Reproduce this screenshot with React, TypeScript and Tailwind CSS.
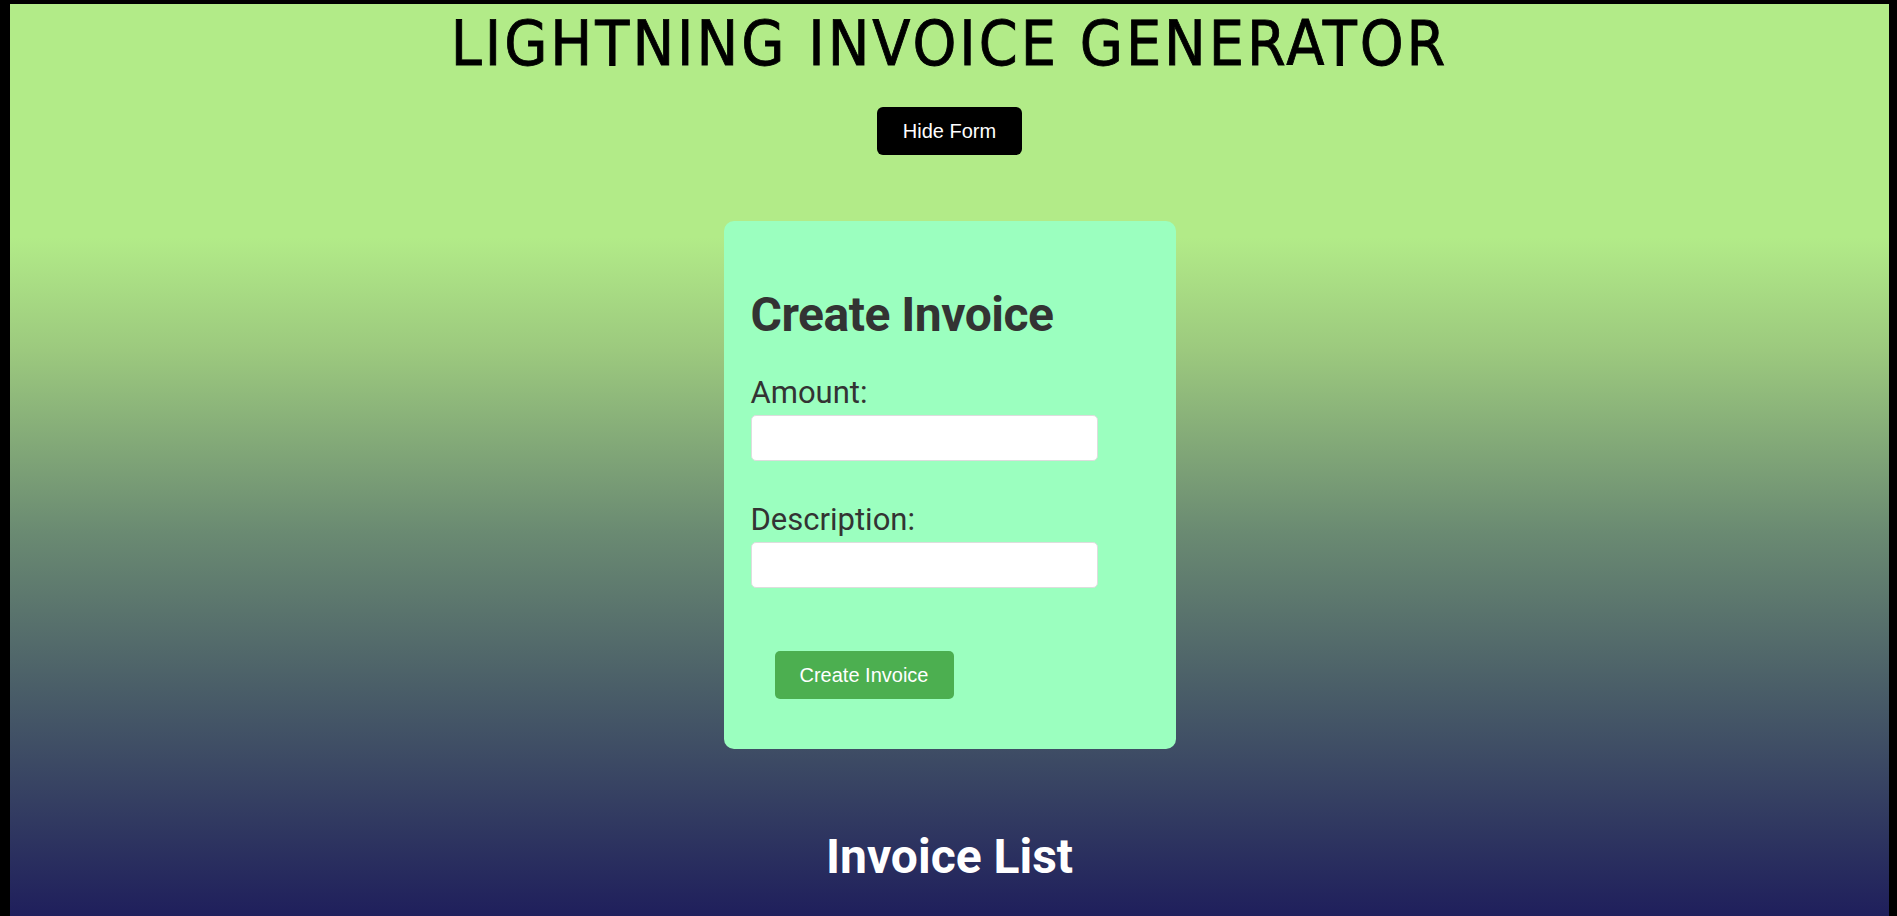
import React, { useState } from 'react';

export default function App() {
  const [showForm, setShowForm] = useState(true);
  const [amount, setAmount] = useState('');
  const [description, setDescription] = useState('');

  return (
    <div className="h-screen bg-black pt-[4px] pl-[10px] pr-[8px] overflow-hidden">
      <div className="h-full flex flex-col items-center bg-[linear-gradient(to_bottom,#b2eb88_0%,#b2eb88_25.6%,#9cc97e_38%,#6a8a72_58%,#4a5e68_75%,#1f1f5c_100%)]">
        {/* Header */}
        <h1 className="mt-[9px] text-[62px] leading-[62px] tracking-[3px] text-black [-webkit-text-stroke:0.8px_black] font-['DejaVu_Sans_Condensed',sans-serif]">
          LIGHTNING INVOICE GENERATOR
        </h1>

        <button
          onClick={() => setShowForm(!showForm)}
          className="mt-[32px] w-[145px] h-[48px] rounded-[6px] bg-black text-white text-[20px] font-['Liberation_Sans',sans-serif]"
        >
          {showForm ? 'Hide Form' : 'Show Form'}
        </button>

        {/* Form card */}
        {showForm && (
          <div className="mt-[66px] w-[452px] h-[528px] rounded-[10px] bg-[#9bffbf] pl-[27px] pt-[69px] text-[#333333] font-['Roboto',sans-serif]">
            <h2 className="text-[48px] leading-[50px] font-bold tracking-[-0.5px]">Create Invoice</h2>

            <label className="block mt-[36px] text-[31px] leading-[34px]">Amount:</label>
            <input
              value={amount}
              onChange={(e) => setAmount(e.target.value)}
              className="block mt-[5px] w-[347px] h-[46px] rounded-[5px] border border-[#dddddd] bg-white px-2 text-[18px]"
            />

            <label className="block mt-[42px] text-[31px] leading-[34px]">Description:</label>
            <input
              value={description}
              onChange={(e) => setDescription(e.target.value)}
              className="block mt-[5px] w-[347px] h-[46px] rounded-[5px] border border-[#dddddd] bg-white px-2 text-[18px]"
            />

            <button className="mt-[63px] ml-[24px] w-[179px] h-[48px] rounded-[5px] bg-[#4caf50] text-white text-[20px] font-['Liberation_Sans',sans-serif]">
              Create Invoice
            </button>
          </div>
        )}

        {/* List */}
        <h2 className="mt-[82px] text-[48px] leading-[52px] font-bold text-white font-['Roboto',sans-serif]">
          Invoice List
        </h2>
      </div>
    </div>
  );
}
